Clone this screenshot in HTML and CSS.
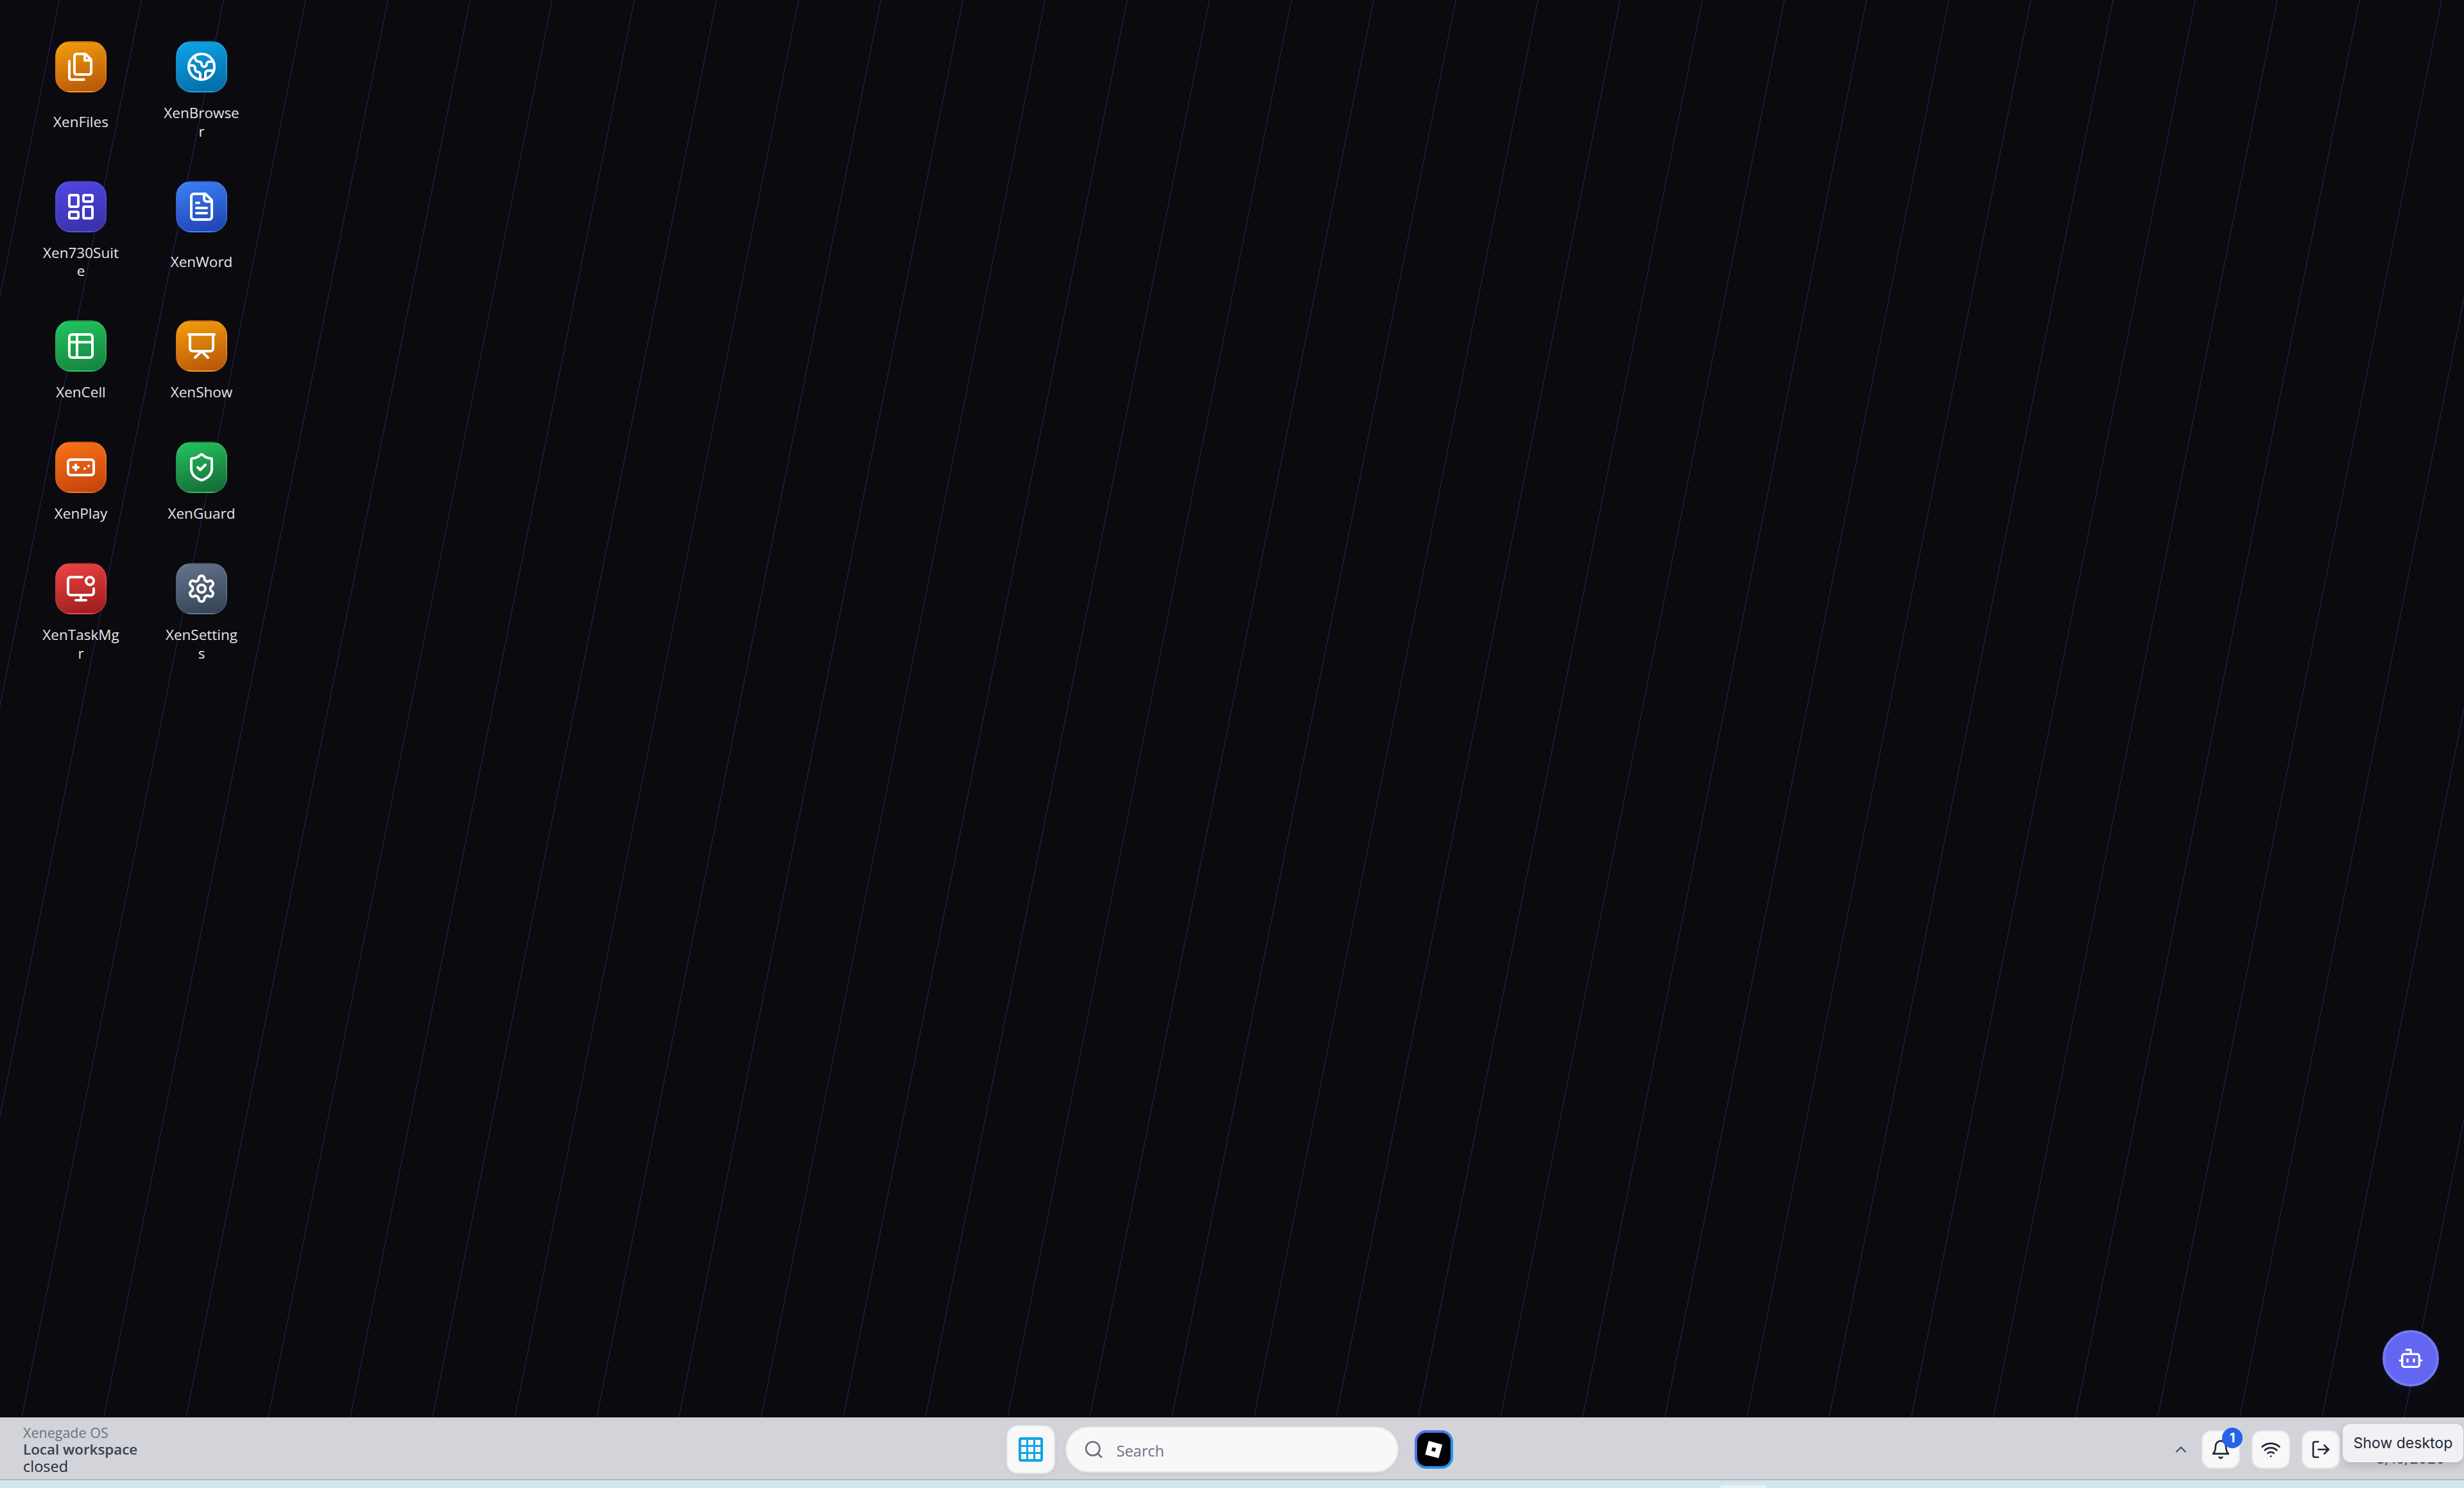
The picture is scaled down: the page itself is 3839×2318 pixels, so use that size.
FILE: index.html
```html
<!DOCTYPE html>
<html lang="en">
<head>
<meta charset="utf-8">
<title>Xenegade OS</title>
<link rel="stylesheet" href="styles.css">
</head>
<body>
<main class="desktop">
  <div class="apps">
    <div class="app"><div class="tile t-amber"><svg class="ic" viewBox="0 0 24 24"><path d="M15.5 2H8.6c-.4 0-.8.2-1.1.5-.3.3-.5.7-.5 1.1v12.8c0 .4.2.8.5 1.1.3.3.7.5 1.1.5h9.8c.4 0 .8-.2 1.1-.5.3-.3.5-.7.5-1.1V6.5L15.5 2z"/><path d="M3 7.6v12.8c0 .4.2.8.5 1.1.3.3.7.5 1.1.5h9.8"/><path d="M15 2v5h5"/></svg></div><div class="label"><span>XenFiles</span></div></div>
    <div class="app"><div class="tile t-sky"><svg class="ic" viewBox="0 0 24 24"><path d="M21.54 15H17a2 2 0 0 0-2 2v4.54"/><path d="M7 3.34V5a3 3 0 0 0 3 3a2 2 0 0 1 2 2c0 1.1.9 2 2 2a2 2 0 0 0 2-2c0-1.1.9-2 2-2h3.17"/><path d="M11 21.95V18a2 2 0 0 0-2-2a2 2 0 0 1-2-2v-1a2 2 0 0 0-2-2H2.05"/><circle cx="12" cy="12" r="10"/></svg></div><div class="label"><span>XenBrowser</span></div></div>
    <div class="app"><div class="tile t-indigo"><svg class="ic" viewBox="0 0 24 24"><rect x="3" y="3" width="7" height="9" rx="1"/><rect x="14" y="3" width="7" height="5" rx="1"/><rect x="14" y="12" width="7" height="9" rx="1"/><rect x="3" y="16" width="7" height="5" rx="1"/></svg></div><div class="label"><span>Xen730Suite</span></div></div>
    <div class="app"><div class="tile t-blue"><svg class="ic" viewBox="0 0 24 24"><path d="M15 2H6a2 2 0 0 0-2 2v16a2 2 0 0 0 2 2h12a2 2 0 0 0 2-2V7Z"/><path d="M14 2v4a2 2 0 0 0 2 2h4"/><path d="M10 9H8"/><path d="M16 13H8"/><path d="M16 17H8"/></svg></div><div class="label"><span>XenWord</span></div></div>
    <div class="app"><div class="tile t-green"><svg class="ic" viewBox="0 0 24 24"><path d="M9 3H5a2 2 0 0 0-2 2v4m6-6h10a2 2 0 0 1 2 2v4M9 3v18m0 0h10a2 2 0 0 0 2-2V9M9 21H5a2 2 0 0 1-2-2V9m0 0h18"/></svg></div><div class="label"><span>XenCell</span></div></div>
    <div class="app"><div class="tile t-amber"><svg class="ic" viewBox="0 0 24 24"><path d="M2 3h20"/><path d="M21 3v11a2 2 0 0 1-2 2H5a2 2 0 0 1-2-2V3"/><path d="m7 21 5-5 5 5"/></svg></div><div class="label"><span>XenShow</span></div></div>
    <div class="app"><div class="tile t-orange"><svg class="ic" viewBox="0 0 24 24"><line x1="6" x2="10" y1="12" y2="12"/><line x1="8" x2="8" y1="10" y2="14"/><line x1="15" x2="15.01" y1="13" y2="13"/><line x1="18" x2="18.01" y1="11" y2="11"/><rect x="2" y="6" width="20" height="12" rx="2"/></svg></div><div class="label"><span>XenPlay</span></div></div>
    <div class="app"><div class="tile t-emerald"><svg class="ic" viewBox="0 0 24 24"><path d="M20 13c0 5-3.5 7.5-7.66 8.95a1 1 0 0 1-.67-.01C7.5 20.5 4 18 4 13V6a1 1 0 0 1 1-1c2 0 4.5-1.2 6.24-2.72a1.17 1.17 0 0 1 1.52 0C14.51 3.81 17 5 19 5a1 1 0 0 1 1 1z"/><path d="m9 12 2 2 4-4"/></svg></div><div class="label"><span>XenGuard</span></div></div>
    <div class="app"><div class="tile t-red"><svg class="ic" viewBox="0 0 24 24"><circle cx="19" cy="6" r="3"/><path d="M22 12v3a2 2 0 0 1-2 2H4a2 2 0 0 1-2-2V5a2 2 0 0 1 2-2h9"/><path d="M12 17v4"/><path d="M8 21h8"/></svg></div><div class="label"><span>XenTaskMgr</span></div></div>
    <div class="app"><div class="tile t-slate"><svg class="ic" viewBox="0 0 24 24"><path d="M12.22 2h-.44a2 2 0 0 0-2 2v.18a2 2 0 0 1-1 1.73l-.43.25a2 2 0 0 1-2 0l-.15-.08a2 2 0 0 0-2.73.73l-.22.38a2 2 0 0 0 .73 2.73l.15.1a2 2 0 0 1 1 1.72v.51a2 2 0 0 1-1 1.74l-.15.09a2 2 0 0 0-.73 2.73l.22.38a2 2 0 0 0 2.73.73l.15-.08a2 2 0 0 1 2 0l.43.25a2 2 0 0 1 1 1.73V20a2 2 0 0 0 2 2h.44a2 2 0 0 0 2-2v-.18a2 2 0 0 1 1-1.73l.43-.25a2 2 0 0 1 2 0l.15.08a2 2 0 0 0 2.73-.73l.22-.39a2 2 0 0 0-.73-2.73l-.15-.08a2 2 0 0 1-1-1.74v-.5a2 2 0 0 1 1-1.74l.15-.09a2 2 0 0 0 .73-2.73l-.22-.38a2 2 0 0 0-2.73-.73l-.15.08a2 2 0 0 1-2 0l-.43-.25a2 2 0 0 1-1-1.73V4a2 2 0 0 0-2-2z"/><circle cx="12" cy="12" r="3"/></svg></div><div class="label"><span>XenSettings</span></div></div>
  </div>
  <button class="bot"><svg viewBox="0 0 24 24"><path d="M12 8V4H8"/><rect x="4" y="8" width="16" height="12" rx="2"/><path d="M2 14h2"/><path d="M20 14h2"/><path d="M15 13v2"/><path d="M9 13v2"/></svg></button>
</main>
<footer class="taskbar">
  <div class="status">
    <div class="os">Xenegade OS</div>
    <div class="ws">Local workspace</div>
    <div class="st">closed</div>
  </div>
  <div class="center">
    <button class="start"><svg viewBox="0 0 38 38"><rect width="38" height="38" rx="4" class="grid-bg"/><rect x="4" y="4" width="8" height="8" class="grid-hole"/><rect x="15" y="4" width="8" height="8" class="grid-hole"/><rect x="26" y="4" width="8" height="8" class="grid-hole"/><rect x="4" y="15" width="8" height="8" class="grid-hole"/><rect x="15" y="15" width="8" height="8" class="grid-hole"/><rect x="26" y="15" width="8" height="8" class="grid-hole"/><rect x="4" y="26" width="8" height="8" class="grid-hole"/><rect x="15" y="26" width="8" height="8" class="grid-hole"/><rect x="26" y="26" width="8" height="8" class="grid-hole"/></svg></button>
    <div class="search"><svg viewBox="0 0 24 24"><circle cx="11" cy="11" r="8"/><path d="m21 21-4.3-4.3"/></svg><span class="search-text">Search</span></div>
    <div class="pinned"><div class="pinned-in"><svg viewBox="0 0 32 32"><path class="rb" fill-rule="evenodd" d="M7.9 2.5 29.2 8.4 23.5 29.5 2.4 23.9ZM13.7 12.4 12.2 18 17.8 19.6 19.3 13.9Z"/></svg></div></div>
  </div>
  <div class="tray">
    <svg class="chev" viewBox="0 0 24 24"><path d="m18 15-6-6-6 6"/></svg>
    <button class="tbtn"><svg viewBox="0 0 24 24"><path d="M6 8a6 6 0 0 1 12 0c0 7 3 9 3 9H3s3-2 3-9"/><path d="M10.3 21a1.94 1.94 0 0 0 3.4 0"/></svg><span class="badge">1</span></button>
    <button class="tbtn"><svg viewBox="0 0 24 24"><path d="M12 20h.01"/><path d="M2 8.82a15 15 0 0 1 20 0"/><path d="M5 12.859a10 10 0 0 1 14 0"/><path d="M8.5 16.429a5 5 0 0 1 7 0"/></svg></button>
    <button class="tbtn"><svg viewBox="0 0 24 24"><path d="M9 21H5a2 2 0 0 1-2-2V5a2 2 0 0 1 2-2h4"/><path d="m16 17 5-5-5-5"/><path d="M21 12H9"/></svg></button>
    <div class="clock"><div class="date">3/10/2026</div></div>
  </div>
  <div class="tooltip">Show desktop</div>
</footer>
<div class="strip"><div class="strip-pill"></div></div>
</body>
</html>
```
FILE: styles.css
```css
* { box-sizing: border-box; }
html, body { height: 100%; }
body {
  margin: 0;
  display: flex;
  flex-direction: column;
  height: 100vh;
  overflow: hidden;
  font-family: "Open Sans", "Noto Sans", sans-serif;
  background: #cfe6ec;
}
button { font: inherit; padding: 0; cursor: pointer; }

.desktop {
  position: relative;
  flex: 1;
  min-height: 0;
  background-color: #0a0a0f;
  background-image: repeating-linear-gradient(101.33deg,
    transparent 0, transparent 89.3px,
    #1a1b40 90px, #1a1b40 91px,
    transparent 91.7px, transparent 125.5px);
}
.apps {
  display: grid;
  grid-template-columns: 188px 188px;
  row-gap: 62px;
  width: max-content;
  padding: 64px 0 0 32px;
}
.app { display: flex; flex-direction: column; align-items: center; }
.tile {
  width: 80px;
  height: 80px;
  border-radius: 24px;
  border: 2px solid rgba(255, 255, 255, .07);
  background-clip: border-box;
  display: flex;
  align-items: center;
  justify-content: center;
  flex: none;
}
.ic { width: 48px; height: 48px; fill: none; stroke: #fff; stroke-width: 2; stroke-linecap: round; stroke-linejoin: round; }
.t-amber { background-image: linear-gradient(165deg, #f59e0b, #b45309); }
.t-sky { background-image: linear-gradient(165deg, #0ea5e9, #0369a1); }
.t-indigo { background-image: linear-gradient(165deg, #4f46e5, #3730a3); }
.t-blue { background-image: linear-gradient(165deg, #3b82f6, #1e40af); }
.t-green { background-image: linear-gradient(165deg, #22c55e, #15803d); }
.t-orange { background-image: linear-gradient(165deg, #f97316, #c2410c); }
.t-emerald { background-image: linear-gradient(165deg, #22c55e, #166534); }
.t-red { background-image: linear-gradient(165deg, #ef4444, #991b1b); }
.t-slate { background-image: linear-gradient(165deg, #64748b, #334155); }
.label {
  flex: 1;
  width: 122px;
  margin-top: 18px;
  display: flex;
  align-items: center;
  justify-content: center;
  text-align: center;
  font-size: 22.5px;
  line-height: 28.8px;
  color: #e5e5e5;
  word-break: break-all;
}
.bot {
  position: absolute;
  right: 39px;
  bottom: 48px;
  width: 88px;
  height: 88px;
  border-radius: 50%;
  background: #6366f1;
  border: 4px solid #7579f3;
  box-shadow: 0 8px 24px rgba(99, 102, 241, .08);
  display: flex;
  align-items: center;
  justify-content: center;
}
.bot svg { width: 40px; height: 40px; fill: none; stroke: #fff; stroke-width: 2; stroke-linecap: round; stroke-linejoin: round; }

.taskbar {
  position: relative;
  flex: none;
  height: 98px;
  padding-top: 4px;
  background: #d3d4d9;
  border-bottom: 2px solid #b2b7bd;
  display: flex;
  align-items: center;
}
.status { flex: 1; padding-left: 36px; min-width: 0; }
.os { font-size: 21.5px; line-height: 26px; color: #6b7280; }
.ws { font-size: 22.4px; line-height: 26px; font-weight: 600; color: #374151; }
.st { font-size: 23.5px; line-height: 26px; color: #1f2937; }
.center { display: flex; align-items: center; gap: 16px; margin-right: 44px; }
.start {
  width: 76px;
  height: 76px;
  border-radius: 18px;
  background: #f8f8f8;
  border: 2px solid #e8e8ea;
  box-shadow: 0 2px 6px rgba(0, 0, 0, .05);
  display: flex;
  align-items: center;
  justify-content: center;
}
.start svg { width: 38px; height: 38px; }
.grid-bg { fill: #0ea5e9; }
.grid-hole { fill: #f8f8f8; }
.search {
  width: 519px;
  height: 72px;
  border-radius: 36px;
  background: #f8f8f8;
  border: 2px solid #e8e8ea;
  box-shadow: 0 2px 6px rgba(0, 0, 0, .05);
  display: flex;
  align-items: center;
  gap: 20px;
  padding-left: 26px;
  font-size: 23.5px;
  color: #6b7280;
}
.search-text { padding-top: 3px; }
.search svg { width: 32px; height: 32px; fill: none; stroke: #6b7280; stroke-width: 2; stroke-linecap: round; stroke-linejoin: round; }
.pinned {
  width: 60px;
  height: 60px;
  margin-left: 9px;
  padding: 4px;
  border-radius: 18px;
  background: linear-gradient(135deg, #6366f1, #0ea5e9);
}
.pinned-in {
  width: 100%;
  height: 100%;
  border-radius: 14px;
  background: #000;
  display: flex;
  align-items: center;
  justify-content: center;
}
.pinned-in svg { width: 32px; height: 32px; }
.rb { fill: #fff; }
.tray { flex: 1; display: flex; align-items: center; justify-content: flex-end; min-width: 0; }
.chev { width: 28px; height: 28px; margin-right: 18px; fill: none; stroke: #4b5563; stroke-width: 2; stroke-linecap: round; stroke-linejoin: round; }
.tbtn {
  position: relative;
  width: 60px;
  height: 60px;
  margin-right: 18px;
  border-radius: 16px;
  background: #f8f8f8;
  border: 2px solid #e8e8ea;
  display: flex;
  align-items: center;
  justify-content: center;
}
.tbtn svg { width: 32px; height: 32px; fill: none; stroke: #1f2937; stroke-width: 2; stroke-linecap: round; stroke-linejoin: round; }
.badge {
  position: absolute;
  top: -6px;
  right: -6px;
  width: 32px;
  height: 32px;
  border-radius: 50%;
  background: #2563eb;
  color: #fff;
  font-family: Inter, sans-serif;
  font-size: 20px;
  font-weight: 700;
  line-height: 32px;
  text-align: center;
}
.clock {
  width: 175px;
  padding-left: 8px;
  text-align: center;
  font-family: Inter, sans-serif;
  font-size: 22px;
  line-height: 28px;
  color: #374151;
}
.date { padding-top: 28px; }
.tooltip {
  position: absolute;
  right: 1px;
  top: 10px;
  width: 188px;
  height: 60px;
  border-radius: 12px;
  background: #f0f0f5;
  box-shadow: 0 6px 14px rgba(0, 0, 0, .14), 0 0 0 1px rgba(0, 0, 0, .03);
  display: flex;
  align-items: center;
  justify-content: center;
  font-family: Inter, sans-serif;
  font-size: 23px;
  color: #1f2937;
}
.strip { flex: none; height: 12px; display: flex; align-items: flex-end; padding-left: 2680px; }
.strip-pill { width: 73px; height: 5px; border-radius: 10px 10px 0 0; background: #e4f1f5; }
```
